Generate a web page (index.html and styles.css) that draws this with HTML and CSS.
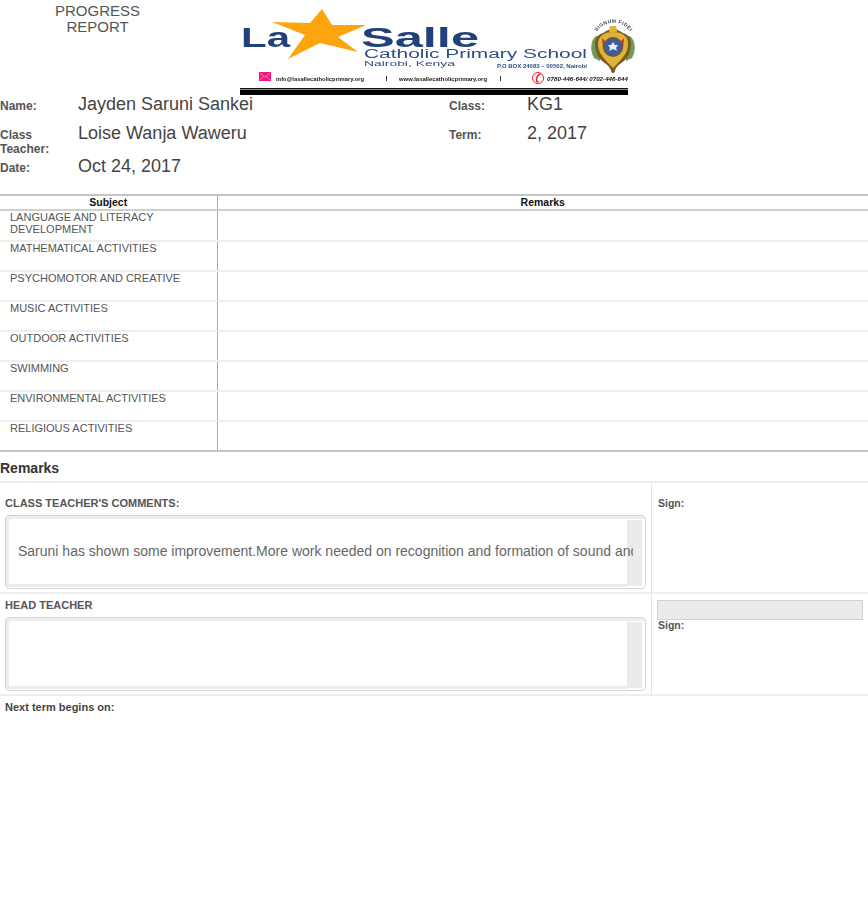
FILE: index.html
```html
<!DOCTYPE html>
<html lang="en">
<head>
<meta charset="utf-8">
<title>Progress Report</title>
<link rel="stylesheet" href="styles.css">
</head>
<body>
<header class="top">
  <h1 class="report-title">PROGRESS REPORT</h1>
  <svg class="logo" width="400" height="96" viewBox="0 0 400 96" role="img" aria-label="La Salle Catholic Primary School">
    <polygon fill="#fda50f" points="82,9 92,25 126,25 98,37 118,52 80,43 48,59 65,35 32,22 70,23"/>
    <text x="1" y="47" class="logo-big" textLength="49" lengthAdjust="spacingAndGlyphs">La</text>
    <text x="121" y="47" class="logo-big" textLength="118" lengthAdjust="spacingAndGlyphs">Salle</text>
    <text x="124" y="58" class="logo-sub" textLength="223" lengthAdjust="spacingAndGlyphs">Catholic Primary School</text>
    <text x="124" y="66" class="logo-place" textLength="91" lengthAdjust="spacingAndGlyphs">Nairobi, Kenya</text>
    <text x="257" y="68" class="logo-box" textLength="90" lengthAdjust="spacingAndGlyphs">P.O BOX 24083 – 00502, Nairobi</text>
    <g>
      <path fill="#6f9a58" d="M356 36c-6 5-6 15-2 22l6 3 1-24zM390 36c6 5 6 15 2 22l-6 3-1-24z"/>
      <path fill="#7a5c20" d="M373 29c-5 0-8 3-10 4-6 2-8 6-8 11 0 8 3 13 7 17 4 3 8 5 9 10 1 3 3 3 4 0 1-5 5-7 9-10 4-4 7-9 7-17 0-5-2-9-8-11-2-1-5-4-10-4z"/>
      <path fill="#e0b23a" d="M373 32c-9 0-15 4-15 12 0 9 6 15 15 24 9-9 15-15 15-24 0-8-6-12-15-12z"/>
      <path fill="#b5402f" d="M362 38l3 3-2 9zM384 38l-3 3 2 9z"/>
      <circle cx="373" cy="47" r="10" fill="#6a5a30"/>
      <circle cx="373" cy="47" r="8.500" fill="#3f5c9c"/>
      <polygon fill="#e8ecf5" points="373,42 375,45 378,45 376,48 377,51 373,49 369,51 370,48 368,45 371,45"/>
      <path fill="#e0b23a" d="M370 26h6l1 6h-8z"/>
      <path id="emblem-arc" fill="none" d="M355 36a19 17 0 0 1 37 0"/>
      <text class="logo-motto"><textPath href="#emblem-arc" startOffset="50%" text-anchor="middle">SIGNUM FIDEI</textPath></text>
    </g>
    <rect x="19" y="72" width="12" height="9" fill="#f4167f"/>
    <path d="M20 73l5 4 5-4M20 80l4-4M30 80l-4-4" fill="none" stroke="#ff9ac8" stroke-width=".7"/>
    <text x="36" y="81" class="logo-foot" textLength="88" lengthAdjust="spacingAndGlyphs">info@lasallecatholicprimary.org</text>
    <rect x="146" y="76" width="1" height="5" fill="#333"/>
    <text x="159" y="81" class="logo-foot" textLength="88" lengthAdjust="spacingAndGlyphs">www.lasallecatholicprimary.org</text>
    <rect x="260" y="76" width="1" height="5" fill="#333"/>
    <circle cx="298" cy="78" r="5.500" fill="#fff" stroke="#e8202a" stroke-width="1"/>
    <path d="M300.500 74c-2 0-4 3-4 6 0 1.500 1 2 2 1.500" fill="none" stroke="#e8202a" stroke-width="1.600"/>
    <text x="307" y="81" class="logo-phone" textLength="81" lengthAdjust="spacingAndGlyphs">0780-446-644/ 0702-446-644</text>
    <rect x="0" y="88" width="388" height="1.500" fill="#111"/>
    <rect x="0" y="90" width="388" height="5" fill="#000"/>
  </svg>
</header>

<section class="info">
  <div class="info-label">Name:</div><div class="info-value">Jayden Saruni Sankei</div>
  <div class="info-label">Class:</div><div class="info-value">KG1</div>
  <div class="info-label">Class Teacher:</div><div class="info-value">Loise Wanja Waweru</div>
  <div class="info-label">Term:</div><div class="info-value">2, 2017</div>
  <div class="info-label">Date:</div><div class="info-value">Oct 24, 2017</div>
</section>

<table class="subjects">
  <thead><tr><th class="col-subject">Subject</th><th>Remarks</th></tr></thead>
  <tbody>
    <tr><td class="col-subject">LANGUAGE AND LITERACY DEVELOPMENT</td><td></td></tr>
    <tr><td class="col-subject">MATHEMATICAL ACTIVITIES</td><td></td></tr>
    <tr><td class="col-subject">PSYCHOMOTOR AND CREATIVE</td><td></td></tr>
    <tr><td class="col-subject">MUSIC ACTIVITIES</td><td></td></tr>
    <tr><td class="col-subject">OUTDOOR ACTIVITIES</td><td></td></tr>
    <tr><td class="col-subject">SWIMMING</td><td></td></tr>
    <tr><td class="col-subject">ENVIRONMENTAL ACTIVITIES</td><td></td></tr>
    <tr><td class="col-subject">RELIGIOUS ACTIVITIES</td><td></td></tr>
  </tbody>
</table>

<h2 class="remarks-title">Remarks</h2>

<section class="comment-row comment-first">
  <div class="comment-main">
    <div class="comment-label">CLASS TEACHER'S COMMENTS:</div>
    <div class="comment-box">
      <div class="comment-text">Saruni has shown some improvement.More work needed on recognition and formation of sound and letters</div>
      <div class="scroll-v"></div>
      <div class="scroll-h"></div>
    </div>
  </div>
  <div class="comment-sign"><div class="sign-label">Sign:</div></div>
</section>

<section class="comment-row comment-second">
  <div class="comment-main">
    <div class="comment-label">HEAD TEACHER</div>
    <div class="comment-box">
      <div class="comment-text"></div>
      <div class="scroll-v"></div>
      <div class="scroll-h"></div>
    </div>
  </div>
  <div class="comment-sign">
    <div class="sign-field"></div>
    <div class="sign-label">Sign:</div>
  </div>
</section>

<div class="next-term">Next term begins on:</div>
</body>
</html>
```
FILE: styles.css
```css
* { box-sizing: border-box; }
html, body { margin: 0; padding: 0; }
body {
  background: #fff;
  color: #333;
  font-family: "Liberation Sans", Arial, sans-serif;
  font-size: 12px;
  height: 916px;
  overflow: hidden;
}
.top {
  display: flex;
  height: 96px;
}
.report-title {
  margin: 3px 0 0 0;
  width: 195px;
  font-size: 15px;
  font-weight: 400;
  line-height: 16px;
  text-align: center;
  color: #555;
  padding: 0 50px;
}
.logo {
  margin-left: 45px;
  flex: none;
  filter: blur(0.3px);
}
.logo-big { font: 700 28px "Liberation Sans", sans-serif; fill: #22407c; }
.logo-sub { font: 400 12.5px "Liberation Sans", sans-serif; fill: #2f4d88; }
.logo-place { font: 400 8px "Liberation Sans", sans-serif; fill: #2f4d88; }
.logo-box { font: 700 6px "Liberation Sans", sans-serif; fill: #2f4d88; }
.logo-foot { font: 700 6px "Liberation Sans", sans-serif; fill: #222; }
.logo-phone { font: italic 700 6px "Liberation Sans", sans-serif; fill: #111; }
.logo-motto { font: 700 5px "Liberation Sans", sans-serif; fill: #3a4a60; letter-spacing: 0.4px; }

.info {
  display: grid;
  grid-template-columns: 78px 371px 78px 1fr;
  grid-template-rows: 29px 33px 29px;
  height: 98px;
}
.info-label {
  font-size: 12px;
  font-weight: 700;
  line-height: 14px;
  color: #555;
  padding-top: 3px;
}
.info-value {
  font-size: 18px;
  line-height: 20px;
  color: #444;
  margin-top: -2px;
}

.subjects {
  width: 100%;
  border-collapse: collapse;
  table-layout: fixed;
  border-top: 2px solid #c4c4c4;
  border-bottom: 2px solid #c4c4c4;
}
.subjects th {
  height: 15px;
  padding: 0;
  font-size: 10.500px;
  line-height: 13px;
  font-weight: 700;
  color: #111;
  text-align: center;
  border-bottom: 2px solid #d0d0d0;
}
.subjects td {
  height: 30px;
  padding: 0 10px;
  vertical-align: top;
  font-size: 11px;
  line-height: 12px;
  color: #555;
  border-bottom: 2px solid #eee;
}
.subjects tbody tr:first-child td { height: 31px; }
.subjects tbody tr:last-child td { border-bottom: 0; }
.subjects .col-subject {
  width: 217px;
  border-right: 1px solid #aaa;
}

.remarks-title {
  margin: 0;
  height: 31px;
  padding-top: 8px;
  font-size: 14px;
  line-height: 16px;
  font-weight: 700;
  color: #333;
  border-bottom: 2px solid #eee;
}

.comment-row {
  display: grid;
  grid-template-columns: 651px 1fr;
  border-bottom: 2px solid #eee;
}
.comment-first { height: 111px; }
.comment-second { height: 102px; }
.comment-main { padding: 0 5px; }
.comment-first .comment-main { padding-top: 14px; }
.comment-second .comment-main { padding-top: 5px; }
.comment-label {
  font-size: 11px;
  line-height: 12px;
  font-weight: 700;
  color: #555;
  margin-bottom: 6px;
}
.comment-box {
  position: relative;
  width: 641px;
  height: 74px;
  border: 1px solid #d6d6d6;
  border-radius: 4px;
  overflow: hidden;
  background: #fff;
  box-shadow: inset 3px 3px 0 #eee;
}
.comment-text {
  position: relative;
  z-index: 1;
  margin: 0 12px;
  height: 71px;
  font-size: 14px;
  line-height: 71px;
  color: #666;
  white-space: nowrap;
  overflow: hidden;
}
.scroll-v {
  position: absolute;
  top: 4px;
  right: 3px;
  bottom: 2px;
  width: 15px;
  background: #ebebeb;
}
.scroll-h {
  position: absolute;
  left: 0;
  right: 18px;
  bottom: 1px;
  height: 3px;
  background: #ebebeb;
}
.comment-sign {
  border-left: 1px solid #e4e4e4;
  padding: 5px 5px 0 5px;
}
.comment-first .comment-sign { padding-top: 14px; }
.sign-label {
  margin-left: 1px;
  font-size: 10.500px;
  line-height: 13px;
  font-weight: 700;
  color: #555;
}
.sign-field {
  height: 20px;
  background: #ebebeb;
  border: 1px solid #d0d0d0;
  margin-top: 1px;
  margin-bottom: -1px;
}
.next-term {
  padding: 5px 5px 0;
  font-size: 11px;
  line-height: 13px;
  font-weight: 700;
  color: #444;
}
```
